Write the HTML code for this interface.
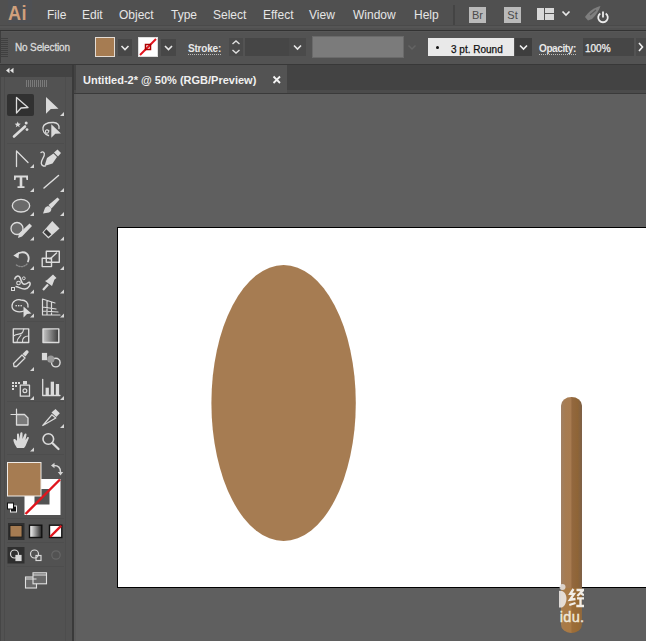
<!DOCTYPE html>
<html><head><meta charset="utf-8">
<style>
*{margin:0;padding:0;box-sizing:border-box}
html,body{width:646px;height:641px;overflow:hidden;background:#5f5f5f;font-family:"Liberation Sans",sans-serif;position:relative}
.abs{position:absolute}
.mi{position:absolute;top:9px;font-size:12px;color:#e6e6e6;line-height:13px;white-space:nowrap}
.t10{position:absolute;font-size:10px;line-height:11px;white-space:nowrap}
.dot{border-bottom:1px dotted #bbb}
</style></head><body>
<!-- menu bar -->
<div class="abs" style="left:0;top:0;width:646px;height:30px;background:#505050"></div>
<div class="abs" style="left:0;top:25px;width:646px;height:1px;background:#4a4a4a"></div>
<div class="abs" style="left:0;top:26px;width:646px;height:2px;background:#555555"></div>
<div class="abs" style="left:0;top:30px;width:646px;height:1px;background:#333333"></div>
<div class="abs" style="left:8px;top:0px;width:24px;height:23px;background:#4e5054"></div>
<div class="abs" style="left:8px;top:2px;font-size:21px;font-weight:bold;color:#d0a07c;line-height:22px;transform:scaleX(0.86);transform-origin:0 0;letter-spacing:0.5px">Ai</div>
<div class="mi" style="left:47px">File</div>
<div class="mi" style="left:82px">Edit</div>
<div class="mi" style="left:119px">Object</div>
<div class="mi" style="left:171px">Type</div>
<div class="mi" style="left:213px">Select</div>
<div class="mi" style="left:263px">Effect</div>
<div class="mi" style="left:309px">View</div>
<div class="mi" style="left:353px">Window</div>
<div class="mi" style="left:414px">Help</div>
<div class="abs" style="left:453px;top:5px;width:2px;height:20px;background:#444"></div>
<div class="abs" style="left:469px;top:7px;width:17px;height:16px;background:#bababa;color:#4a4a4a;font-size:11px;line-height:16px;text-align:center">Br</div>
<div class="abs" style="left:504px;top:7px;width:17px;height:16px;background:#bababa;color:#4a4a4a;font-size:11px;line-height:16px;text-align:center">St</div>
<svg class="abs" style="left:530px;top:0" width="116" height="30">
  <rect x="7" y="8" width="7" height="12" fill="#d8d8d8"/>
  <rect x="15" y="8" width="9" height="5" fill="#d8d8d8"/>
  <rect x="15" y="14" width="9" height="6" fill="#d8d8d8"/>
  <path d="M32.5 11.5 L36 15 L39.5 11.5" stroke="#e8e8e8" stroke-width="1.7" fill="none"/>
  <path d="M55 17 C58 12 64 7.5 70.5 6 C69 10.5 66.5 14.5 62 19 L58 20.5 Z" fill="#7e7e7e"/>
  <path d="M60 15 L66 10" stroke="#5a5a5a" stroke-width="1.2"/>
  <path d="M70.3 13.5 A4.8 4.8 0 1 0 75.7 13.5" stroke="#ececec" stroke-width="1.8" fill="none"/>
  <line x1="73" y1="11.5" x2="73" y2="17.5" stroke="#ececec" stroke-width="1.8"/>
</svg>
<!-- control bar -->
<div class="abs" style="left:0;top:31px;width:646px;height:33px;background:#535353"></div>
<div class="abs" style="left:0;top:31px;width:646px;height:1px;background:#575757"></div>
<div class="abs" style="left:0;top:64px;width:646px;height:1px;background:#383838"></div>
<div class="abs" style="left:0;top:31px;width:1px;height:32px;background:#3e3e3e"></div>
<div class="abs" style="left:1px;top:38px;width:7px;height:20px;background:repeating-linear-gradient(to bottom,#404040 0,#404040 1px,#535353 1px,#535353 2px)"></div>
<div class="t10" style="left:15px;top:42px;color:#dadada;letter-spacing:-0.15px;-webkit-text-stroke:0.3px #dadada">No Selection</div>
<div class="abs" style="left:95px;top:37px;width:20px;height:20px;border:1px solid #e4dcd4;background:#a67c52"></div>
<div class="abs" style="left:118px;top:39px;width:14px;height:17px;background:#474747"></div>
<svg class="abs" style="left:118px;top:39px" width="14" height="17"><path d="M3.5 7 L7 10.5 L10.5 7" stroke="#e8e8e8" stroke-width="1.6" fill="none"/></svg>
<svg class="abs" style="left:138px;top:37px" width="20" height="20">
  <rect x="0.5" y="0.5" width="19" height="19" fill="#fff" stroke="#ddd"/>
  <line x1="2" y1="18" x2="18" y2="2" stroke="#e3141e" stroke-width="2"/>
  <rect x="7.5" y="7.5" width="5" height="5" fill="none" stroke="#a00" stroke-width="1.5"/>
</svg>
<div class="abs" style="left:161px;top:39px;width:15px;height:17px;background:#474747"></div>
<svg class="abs" style="left:161px;top:39px" width="15" height="17"><path d="M4 7 L7.5 10.5 L11 7" stroke="#e8e8e8" stroke-width="1.6" fill="none"/></svg>
<div class="t10" style="left:188px;top:43px;color:#e8e8e8;font-weight:bold;letter-spacing:-0.2px"><span class="dot">Stroke:</span></div>
<div class="abs" style="left:229px;top:38px;width:14px;height:18px;background:#4a4a4a"></div>
<svg class="abs" style="left:229px;top:38px" width="14" height="18"><path d="M3.5 6 L7 3 L10.5 6 M3.5 12 L7 15 L10.5 12" stroke="#e0e0e0" stroke-width="1.4" fill="none"/></svg>
<div class="abs" style="left:245px;top:38px;width:44px;height:18px;background:#464646"></div>
<div class="abs" style="left:289px;top:38px;width:17px;height:18px;background:#4a4a4a"></div>
<svg class="abs" style="left:289px;top:38px" width="17" height="18"><path d="M5 7.5 L8.5 11 L12 7.5" stroke="#e8e8e8" stroke-width="1.6" fill="none"/></svg>
<div class="abs" style="left:312px;top:36px;width:92px;height:22px;background:#7b7b7b;border:1px solid #6a6a6a"></div>
<svg class="abs" style="left:405px;top:38px" width="14" height="18"><path d="M3.5 7.5 L7 11 L10.5 7.5" stroke="#646464" stroke-width="1.5" fill="none"/></svg>
<div class="abs" style="left:428px;top:38px;width:86px;height:18px;background:#e9e9e9"></div>
<div class="abs" style="left:436px;top:46px;width:3px;height:3px;border-radius:50%;background:#111"></div>
<div class="t10" style="left:451px;top:44px;color:#111;-webkit-text-stroke:0.25px #111">3 pt. Round</div>
<div class="abs" style="left:515px;top:38px;width:17px;height:18px;background:#3e3e3e"></div>
<svg class="abs" style="left:515px;top:38px" width="17" height="18"><path d="M5 7.5 L8.5 11 L12 7.5" stroke="#f0f0f0" stroke-width="1.6" fill="none"/></svg>
<div class="t10" style="left:539px;top:43px;color:#e8e8e8;font-weight:bold;letter-spacing:-0.4px"><span class="dot">Opacity:</span></div>
<div class="abs" style="left:583px;top:38px;width:51px;height:18px;background:#464646"></div>
<div class="t10" style="left:585px;top:43px;color:#f0f0f0;-webkit-text-stroke:0.25px #f0f0f0">100%</div>
<div class="abs" style="left:636px;top:38px;width:10px;height:18px;background:#4a4a4a"></div>
<svg class="abs" style="left:636px;top:38px" width="10" height="18"><path d="M3 5 L6.5 9 L3 13" stroke="#f0f0f0" stroke-width="1.6" fill="none"/></svg>
<!-- tools panel -->
<div class="abs" style="left:0;top:65px;width:72px;height:576px;background:#525252"></div>
<div class="abs" style="left:0;top:65px;width:72px;height:12px;background:#434343"></div>
<div class="abs" style="left:72px;top:65px;width:2px;height:576px;background:#3a3a3a"></div>
<div class="abs" style="left:0;top:77px;width:1px;height:564px;background:#464646"></div>
<div class="abs" style="left:4px;top:77px;width:1px;height:564px;background:#4b4b4b"></div>
<div class="abs" style="left:65px;top:77px;width:1px;height:564px;background:#4d4d4d"></div>
<div class="abs" style="left:74px;top:94px;width:2px;height:547px;background:#5a5a5a"></div>

<!-- tool icons -->
<svg class="abs" style="left:0;top:0" width="72" height="641">
 <g fill="none" stroke="#4d4d4d" stroke-width="1">
  <line x1="7" y1="143.5" x2="64" y2="143.5"/>
  <line x1="7" y1="321.5" x2="64" y2="321.5"/>
  <line x1="7" y1="401.5" x2="64" y2="401.5"/>
  <line x1="7" y1="454.5" x2="64" y2="454.5"/>
  <line x1="7" y1="518.5" x2="64" y2="518.5"/>
  <line x1="7" y1="542.5" x2="64" y2="542.5"/>
  <line x1="7" y1="566.5" x2="64" y2="566.5"/>
 </g>
 <!-- header -->
 <path d="M6 70.5 L9.5 67.8 L9.5 73.2 Z M10 70.5 L13.5 67.8 L13.5 73.2 Z" fill="#e4e4e4"/>
 <g stroke="#7a7a7a" stroke-width="1">
  <line x1="26.5" y1="80" x2="26.5" y2="87"/><line x1="28.5" y1="80" x2="28.5" y2="87"/><line x1="30.5" y1="80" x2="30.5" y2="87"/><line x1="32.5" y1="80" x2="32.5" y2="87"/><line x1="34.5" y1="80" x2="34.5" y2="87"/><line x1="36.5" y1="80" x2="36.5" y2="87"/><line x1="38.5" y1="80" x2="38.5" y2="87"/><line x1="40.5" y1="80" x2="40.5" y2="87"/><line x1="42.5" y1="80" x2="42.5" y2="87"/><line x1="44.5" y1="80" x2="44.5" y2="87"/><line x1="46.5" y1="80" x2="46.5" y2="87"/>
 </g>
 <rect x="7" y="94" width="27" height="22" rx="2" fill="#313131"/>
 <g fill="#d6d6d6">
  <path d="M34 164 L34 168 L30 168 Z"/>
  <path d="M64 112 L64 116 L60 116 Z"/>
  <path d="M34 188 L34 192 L30 192 Z"/><path d="M64 188 L64 192 L60 192 Z"/>
  <path d="M34 212 L34 216 L30 216 Z"/><path d="M64 212 L64 216 L60 216 Z"/>
  <path d="M34 236.5 L34 240.5 L30 240.5 Z"/><path d="M64 236.5 L64 240.5 L60 240.5 Z"/>
  <path d="M34 266 L34 270 L30 270 Z"/><path d="M64 266 L64 270 L60 270 Z"/>
  <path d="M34 289.5 L34 293.5 L30 293.5 Z"/><path d="M64 289.5 L64 293.5 L60 293.5 Z"/>
  <path d="M34 313.5 L34 317.5 L30 317.5 Z"/><path d="M64 313.5 L64 317.5 L60 317.5 Z"/>
  <path d="M34 367 L34 371 L30 371 Z"/>
  <path d="M34 396 L34 400 L30 400 Z"/><path d="M64 396 L64 400 L60 400 Z"/>
  <path d="M64 424 L64 428 L60 428 Z"/>
  <path d="M34 447.5 L34 451.5 L30 451.5 Z"/>
 </g>
 <g stroke="#dcdcdc" stroke-width="1.3" fill="none" stroke-linejoin="round" stroke-linecap="round">
  <!-- selection -->
  <path d="M16.5 97.5 L28 107.5 L21 108 L16.5 113 Z"/>
  <!-- magic wand -->
  <path d="M14 136.5 L25 126.5" stroke-width="2.6"/>
  <!-- lasso -->
  <path d="M48.5 135.5 C44.5 134.5 42.5 131 43 127.5 C43.8 123.8 48.5 122.3 53.5 122.5 C57.5 122.8 59.5 125 59 128.5"/>
  <path d="M49 131 C47 129 45 130 45.5 132 C46 134 48.5 133.5 48.5 131.5" stroke-width="1.1"/>
  <!-- curvature -->
  <path d="M16.5 151 L16.5 166.5 M16.5 151 L28 162.5"/>
  <!-- pen squiggle -->
  <path d="M41 152.5 C42.8 151 45 152.5 44.2 155.5 C43.5 158 41 160.5 41.3 163.3 C41.6 165.5 43.5 166.5 45.3 166"/>
  <!-- line -->
  <path d="M44 188 L58.5 175.5" stroke-width="1.5"/>
  <!-- ellipse -->
  <ellipse cx="21" cy="205.7" rx="8.7" ry="6.3" fill="#6a6a6a"/>
  <!-- shaper -->
  <circle cx="17" cy="228.5" r="6" fill="#686868"/>
  <!-- rotate -->
  <path d="M17 254.5 C19.5 252 24 251.5 26.5 253.5 C28.8 255.5 29 259 28 261.5" stroke-width="1.8"/>
  <path d="M27 264 C24 267.5 18.5 267.5 15.5 264" stroke="#8a8a8a" stroke-width="1.3" stroke-dasharray="1.3 1.3"/>
  <path d="M13.3 255.5 L19 252 L18.5 258.5 Z" fill="#dcdcdc" stroke="none"/>
  <!-- scale -->
  <rect x="46.3" y="251.3" width="13" height="11" stroke-width="1.4"/>
  <rect x="42.2" y="258.3" width="9.3" height="8.3" stroke-width="1.4"/>
  <path d="M50 259 L56.5 253" stroke-width="1.4"/>
  <!-- shape builder -->
  <path d="M24 311 C18 313 12 311 12 306 C12 301 17 299 21 300 C26 300 28.5 303 28 307"/>
  <!-- perspective -->
  <path d="M42.5 299 L42.5 315 L60 315 M42.5 299 L55 303 M42.5 307 L56 309 M47 300.5 L47 315 M51.5 302 L51.5 315 M42.5 311 L58 312" stroke-width="1.2"/>
  <!-- mesh -->
  <rect x="13.3" y="328.9" width="15.4" height="13.6" stroke-width="1.4"/>
  <path d="M13.5 336 C17 333 20 335 22 333 C24 331 23 329 24 329 M17 342 C17 338 20 337 21 335 M22.5 342 C22 338 25 336 28.5 336" stroke-width="1.1"/>
  <!-- gradient -->
  <rect x="43" y="328.9" width="15.8" height="13.6" stroke-width="1.4" fill="url(#grd)"/>
  <!-- eyedropper -->
  <path d="M14 366.5 L13.5 363.5 L22 355 L25 358 L16.5 366.5 Z" stroke-width="1.3"/>
  <!-- blend -->
  <circle cx="55.8" cy="362.6" r="4.3" stroke-width="1.4"/>
  <!-- symbol sprayer can -->
  <rect x="20.3" y="385.2" width="9.2" height="11" stroke-width="1.3"/>
  <circle cx="24.9" cy="390.7" r="1.9" stroke-width="1.2"/>
  <!-- column graph -->
  <path d="M42.7 379.5 L42.7 395.5 L60 395.5" stroke-width="1.3"/>
  <!-- artboard -->
  <path d="M11 414.5 L16 414.5 M16.5 409 L16.5 414" stroke-width="1.2"/>
  <path d="M16.5 414.5 L24.5 414.5 L28 418 L28 425 L16.5 425 Z" fill="#7a7a7a" stroke-width="1.3"/>
  <!-- zoom -->
  <circle cx="48.3" cy="439" r="5.3" stroke-width="1.6"/>
  <path d="M52.3 443 L58.5 449" stroke-width="2.3"/>
 </g>
 <defs><linearGradient id="grd" x1="0" x2="1"><stop offset="0" stop-color="#c8c8c8"/><stop offset="1" stop-color="#3a3a3a"/></linearGradient></defs>
 <g fill="#dadada">
  <!-- direct selection -->
  <path d="M46 97 L58.5 108.7 L50.8 109 L46 113.8 Z"/>
  <!-- wand star & sparkles -->
  <path d="M17.7 121.5 L18.6 123.6 L20.8 123.8 L19.1 125.2 L19.7 127.3 L17.7 126.1 L15.8 127.3 L16.4 125.2 L14.7 123.8 L16.9 123.6 Z"/>
  <circle cx="26.2" cy="123" r="1.5"/><circle cx="27" cy="129.6" r="1.4"/>
  <!-- lasso arrow -->
  <path d="M51.3 124.3 L61 133.5 L55.3 133.8 L51.3 137.8 Z"/>
  <!-- pen nib -->
  <path d="M44.5 166 L47 158 L53.5 153.5 L57 157 L52.5 163.5 Z"/>
  <path d="M54 152.5 L57.5 149.5 L61 153 L58 156.5 Z"/>
  <!-- T -->
  <path d="M14 175.5 L28 175.5 L28 180 L26.5 180 L26 177.5 L22.3 177.5 L22.3 186.3 L24.5 186.3 L24.5 188 L17.5 188 L17.5 186.3 L19.7 186.3 L19.7 177.5 L16 177.5 L15.5 180 L14 180 Z"/>
  <!-- brush -->
  <path d="M48.5 205 L57.5 197.5 L59.5 199.5 L51.5 208.5 Z"/>
  <path d="M43 213.5 L45 208 C46.5 206 49 205.5 50.5 207.3 C52 209 51.5 211.5 49 212.5 Z"/>
  <!-- shaper pencil -->
  <path d="M18 238 L19 233.5 L29.5 223.5 L32 226 L22 236.5 Z"/>
  <!-- eraser -->
  <path d="M42.3 232.5 L52.3 221 L59.5 228.6 L48.4 238.6 Z"/>
  <!-- width tool -->
  <path d="M14.5 279.5 C15.5 276 18.5 275 20 277.5 C21.5 280 21 284 24.5 284.3 C27.5 284.5 28 281.5 29.7 282.5 C31 284 29 288.5 25 289 C21 289.5 18.5 286.5 15.5 286.5" fill="none" stroke="#dadada" stroke-width="1.5"/>
  <circle cx="18.5" cy="283" r="1.8" fill="none" stroke="#dadada" stroke-width="1.1"/>
  <circle cx="23.8" cy="278.3" r="1.4" fill="none" stroke="#dadada" stroke-width="1"/>
  <rect x="11.5" y="287.5" width="3" height="3" fill="none" stroke="#dadada" stroke-width="1"/>
  <!-- puppet pin -->
  <path d="M47 280 L53 274.5 L56.5 278 L54.5 279.5 L52 286 L45 281 Z"/>
  <path d="M43 290 L48 284.5" stroke="#dadada" stroke-width="2.2"/>
  <!-- shape builder arrow -->
  <path d="M23.5 306.5 L31.5 313.5 L27 314 L23.5 317.5 Z"/>
  <rect x="15.5" y="305" width="1.4" height="1.4"/><rect x="18" y="305" width="1.4" height="1.4"/><rect x="20.5" y="305" width="1.4" height="1.4"/>
  <!-- eyedropper bulb -->
  <path d="M22.5 354 L26 350.5 C27.5 349.5 29 351 28.5 352.5 L25.5 356.5 Z"/>
  <!-- blend square & circle -->
  <rect x="41.9" y="352.9" width="5.2" height="7.3"/>
  <circle cx="50.8" cy="359.2" r="3.6" fill="#9a9a9a"/>
  <!-- symbol dots -->
  <rect x="12" y="382" width="2" height="2"/><rect x="15" y="382" width="2" height="2"/><rect x="18" y="382" width="2" height="2"/>
  <rect x="12" y="385" width="2" height="2"/><rect x="15" y="385" width="2" height="2"/>
  <rect x="12" y="388" width="2" height="2"/>
  <rect x="23" y="381" width="4" height="3.5"/>
  <!-- graph bars -->
  <rect x="45.6" y="387.7" width="3.3" height="7.5"/>
  <rect x="50.7" y="381.7" width="3.3" height="13.5"/>
  <rect x="55.8" y="384" width="3.3" height="11.2"/>
  <!-- slice knife -->
  <path d="M51.5 412.5 L55.5 409 L59.8 413.3 L56.3 417 Z"/>
  <path d="M51.8 414.8 L55.8 418 L42.8 425.5 Z" fill="none" stroke="#dadada" stroke-width="1.3" stroke-linejoin="round"/>
  <!-- hand -->
  <path d="M17 448 C15 445 13 441 13.5 439.5 C14 438.5 15.5 439 17 441 L17 434.5 C17 433 19 433 19 434.5 L19.5 439 L20.3 433.3 C20.5 432 22.5 432 22.5 433.5 L22.5 439 L24.5 434.2 C25 433 26.7 433.2 26.5 434.7 L25.5 440 L27.2 437.5 C28 436.5 29.3 437.3 28.7 438.5 L25.5 446 L24 448 Z"/>
 </g>
 <!-- eraser dark -->
 <path d="M46.3 229.3 L51.3 234.3 L48.5 236.8 L43.8 232.2 Z" fill="#3a3a3a"/>
 <!-- color section -->
 <path d="M54 465.5 C58 465.5 60.5 468 60.5 472" stroke="#d4d4d4" stroke-width="1.4" fill="none"/>
 <path d="M51 465.5 L54.5 462.8 L54.5 468.2 Z M60.5 475.5 L57.8 472 L63.2 472 Z" fill="#d4d4d4"/>
 <rect x="24.5" y="479" width="36" height="36" fill="#fff"/>
 <rect x="34.5" y="489" width="15" height="15.5" fill="#535353"/>
 <line x1="25.5" y1="514" x2="60" y2="479.5" stroke="#e0151d" stroke-width="2.4"/>
 <rect x="7" y="462" width="34.5" height="34.5" fill="#f0ebe6"/>
 <rect x="8" y="463" width="32.5" height="32.5" fill="#a67c52"/>
 <rect x="10.5" y="506" width="6" height="6" fill="#111" stroke="#eee" stroke-width="1"/>
 <rect x="7.5" y="503" width="6" height="6" fill="#fff" stroke="#111" stroke-width="1"/>
 <!-- color mode buttons -->
 <rect x="8" y="523" width="16.5" height="17" fill="#2f2f2f"/>
 <rect x="10" y="525.5" width="12" height="11.5" fill="#a67c52" stroke="#1a1a1a" stroke-width="0.8"/>
 <rect x="29.5" y="525.2" width="12.3" height="12.3" fill="url(#grd2)" stroke="#111" stroke-width="1.4"/>
 <defs><linearGradient id="grd2" x1="0" x2="1"><stop offset="0" stop-color="#fff"/><stop offset="1" stop-color="#222"/></linearGradient>
  <clipPath id="nc"><rect x="49.5" y="525.2" width="12.3" height="12.3"/></clipPath></defs>
 <rect x="49.5" y="525.2" width="12.3" height="12.3" fill="#fff" stroke="#111" stroke-width="1.4"/>
 <line x1="50" y1="537" x2="61.5" y2="525.5" stroke="#e0151d" stroke-width="2.4" clip-path="url(#nc)"/>
 <!-- drawing modes -->
 <rect x="7.5" y="547" width="17" height="16.5" fill="#2f2f2f"/>
 <g stroke="#d8d8d8" stroke-width="1.2" fill="none">
  <circle cx="14.5" cy="554" r="4"/>
  <rect x="16" y="555.5" width="5" height="5" fill="#d8d8d8"/>
  <circle cx="34.5" cy="554" r="4"/>
  <rect x="36" y="555.5" width="5" height="5"/>
 </g>
 <circle cx="56" cy="555" r="4.2" fill="none" stroke="#666" stroke-width="1.2"/>
 <!-- screen mode -->
 <g stroke="#e0e0e0" stroke-width="1.1" fill="#6a6a6a">
  <rect x="25.5" y="577" width="11" height="11"/>
  <rect x="33" y="572.8" width="13.5" height="11"/>
 </g>
 <line x1="25.5" y1="579" x2="36.5" y2="579" stroke="#e0e0e0"/>
 <line x1="33" y1="575" x2="46.5" y2="575" stroke="#e0e0e0"/>
</svg>
<!-- tab bar -->
<div class="abs" style="left:74px;top:65px;width:572px;height:28px;background:#434343"></div>
<div class="abs" style="left:74px;top:90px;width:572px;height:3px;background:#4b4b4b"></div>
<div class="abs" style="left:76px;top:65px;width:211px;height:28px;background:#535353"></div>
<div class="abs" style="left:74px;top:93px;width:572px;height:1px;background:#3a3a3a"></div>
<div class="abs" style="left:83px;top:74px;font-size:11px;font-weight:bold;color:#f0f0f0;white-space:nowrap;line-height:12px">Untitled-2* @ 50% (RGB/Preview)</div>
<svg class="abs" style="left:272px;top:75px" width="10" height="10"><path d="M1.5 1.5 L8 8 M8 1.5 L1.5 8" stroke="#f4f4f4" stroke-width="1.8"/></svg>
<!-- artboard -->
<div class="abs" style="left:117px;top:227px;width:540px;height:361px;background:#fff;border:1px solid #000"></div>
<svg class="abs" style="left:0;top:0" width="646" height="641">
  <ellipse cx="283.6" cy="403" rx="72.2" ry="138" fill="#a67c52"/>
  <clipPath id="stk"><rect x="561" y="397" width="21" height="236" rx="10.5" ry="8.5"/></clipPath>
  <linearGradient id="stg" x1="561" x2="582" gradientUnits="userSpaceOnUse">
    <stop offset="0" stop-color="#a08064"/><stop offset="0.2" stop-color="#a67c52"/><stop offset="0.47" stop-color="#a87b50"/>
    <stop offset="0.52" stop-color="#93683f"/><stop offset="0.8" stop-color="#8e6436"/><stop offset="1" stop-color="#7d6048"/>
  </linearGradient>
  <g clip-path="url(#stk)">
    <rect x="561" y="397" width="21" height="236" fill="url(#stg)"/>
    <rect x="561" y="588" width="21" height="46" fill="#b07830" opacity="0.35"/>
  </g>
</svg>
<svg class="abs" style="left:0;top:0" width="646" height="641">
  <defs><clipPath id="wm"><rect x="552" y="580" width="32" height="50"/></clipPath></defs>
  <g clip-path="url(#wm)">
   <circle cx="562.5" cy="587" r="3" fill="#e6e2de" opacity="0.85"/>
   <path d="M559 591 C563 590 566 593 566.5 598 C566.5 602 565 606 562 607.5 L559 607.5 Z" fill="#ece8e4" opacity="0.9"/>
   <g stroke="#f2eee8" stroke-width="2.3" fill="none" stroke-linecap="butt" stroke-linejoin="miter">
    <path d="M573.5 589 L570.3 593.8 L574 593.8 L570 599.8 L575.5 599"/>
    <path d="M569.3 605 L575.5 603"/>
    <path d="M576.5 590 L583.5 590 L577.3 596 M579.5 592.3 L584 595.3"/>
    <path d="M577 598.3 L584 598.3 M580.5 598.3 L580.5 606 M576.3 606 L584.5 606"/>
   </g>
   <text x="559.8" y="622.3" font-family="Liberation Sans" font-size="14.5" letter-spacing="0.3" fill="#f0e8d8" stroke="#f0e8d8" stroke-width="0.4">idu.</text>
  </g>
</svg>
</body></html>
